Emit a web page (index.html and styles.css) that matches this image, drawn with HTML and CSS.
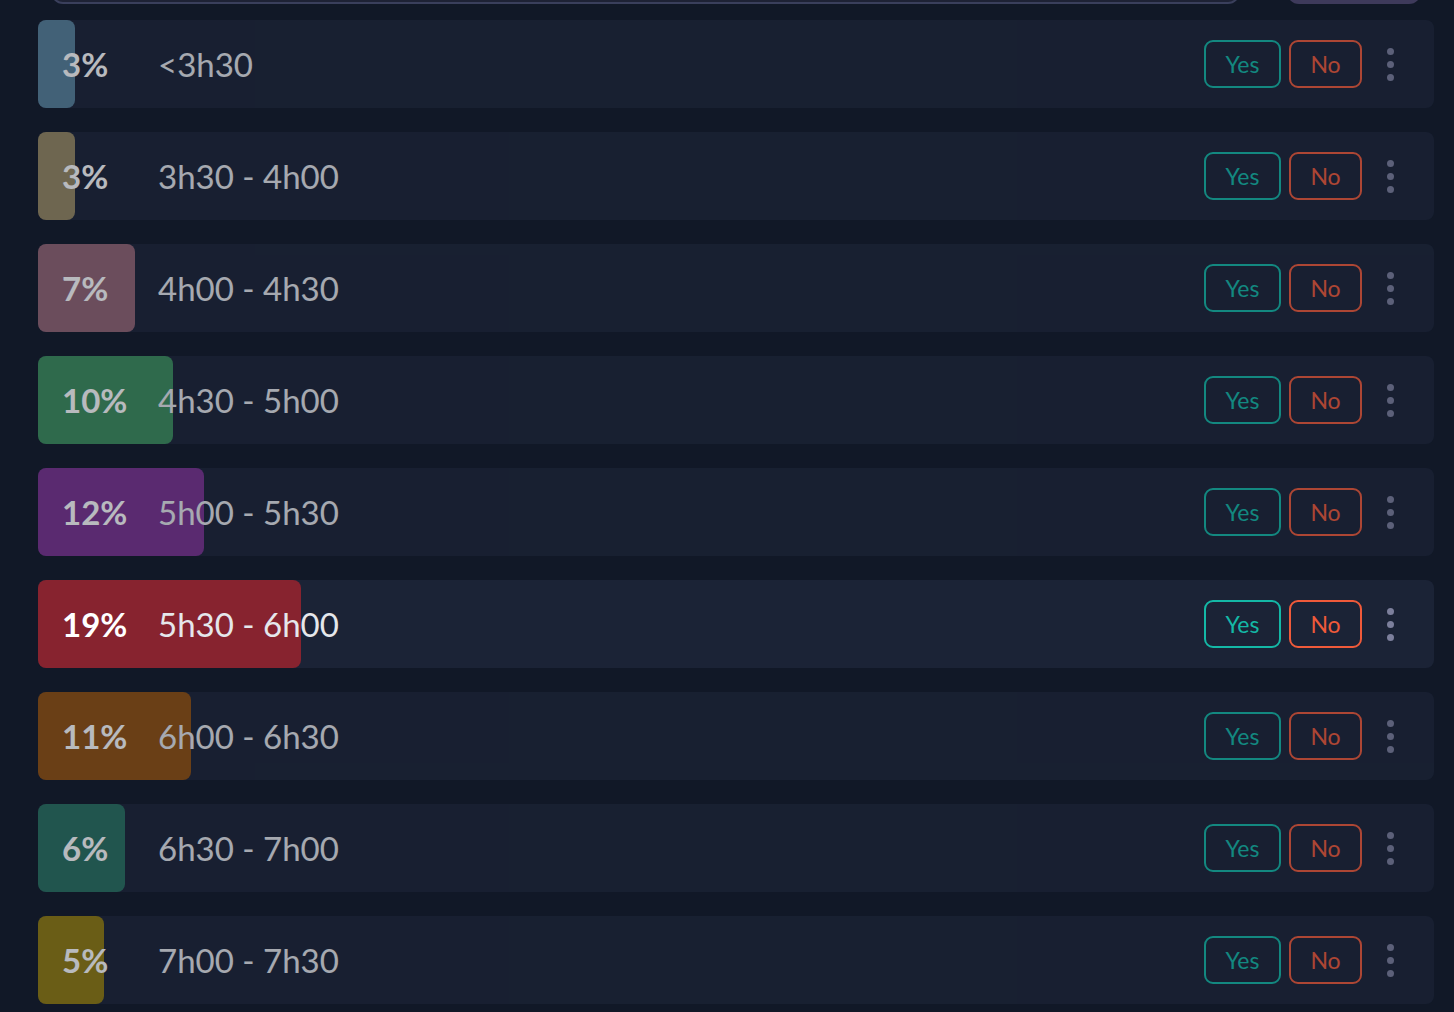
FILE: index.html
```html
<!DOCTYPE html>
<html lang="en">
<head>
<meta charset="utf-8">
<title>Poll</title>
<link rel="stylesheet" href="styles.css">
</head>
<body>
<div class="top">
  <div class="top-input"></div>
  <div class="top-btn"></div>
</div>
<div class="list">
  <div class="row dim">
    <div class="bar c1" style="width:2.65%"></div>
    <span class="pct">3%</span><span class="label">&lt;3h30</span>
    <div class="actions"><button class="yes">Yes</button><button class="no">No</button><span class="kebab"><i></i><i></i><i></i></span></div>
  </div>
  <div class="row dim">
    <div class="bar c2" style="width:2.65%"></div>
    <span class="pct">3%</span><span class="label">3h30 - 4h00</span>
    <div class="actions"><button class="yes">Yes</button><button class="no">No</button><span class="kebab"><i></i><i></i><i></i></span></div>
  </div>
  <div class="row dim">
    <div class="bar c3" style="width:6.95%"></div>
    <span class="pct">7%</span><span class="label">4h00 - 4h30</span>
    <div class="actions"><button class="yes">Yes</button><button class="no">No</button><span class="kebab"><i></i><i></i><i></i></span></div>
  </div>
  <div class="row dim">
    <div class="bar c4" style="width:9.67%"></div>
    <span class="pct">10%</span><span class="label">4h30 - 5h00</span>
    <div class="actions"><button class="yes">Yes</button><button class="no">No</button><span class="kebab"><i></i><i></i><i></i></span></div>
  </div>
  <div class="row dim">
    <div class="bar c5" style="width:11.89%"></div>
    <span class="pct">12%</span><span class="label">5h00 - 5h30</span>
    <div class="actions"><button class="yes">Yes</button><button class="no">No</button><span class="kebab"><i></i><i></i><i></i></span></div>
  </div>
  <div class="row active">
    <div class="bar c6" style="width:18.84%"></div>
    <span class="pct">19%</span><span class="label">5h30 - 6h00</span>
    <div class="actions"><button class="yes">Yes</button><button class="no">No</button><span class="kebab"><i></i><i></i><i></i></span></div>
  </div>
  <div class="row dim">
    <div class="bar c7" style="width:10.96%"></div>
    <span class="pct">11%</span><span class="label">6h00 - 6h30</span>
    <div class="actions"><button class="yes">Yes</button><button class="no">No</button><span class="kebab"><i></i><i></i><i></i></span></div>
  </div>
  <div class="row dim">
    <div class="bar c8" style="width:6.23%"></div>
    <span class="pct">6%</span><span class="label">6h30 - 7h00</span>
    <div class="actions"><button class="yes">Yes</button><button class="no">No</button><span class="kebab"><i></i><i></i><i></i></span></div>
  </div>
  <div class="row dim">
    <div class="bar c9" style="width:4.73%"></div>
    <span class="pct">5%</span><span class="label">7h00 - 7h30</span>
    <div class="actions"><button class="yes">Yes</button><button class="no">No</button><span class="kebab"><i></i><i></i><i></i></span></div>
  </div>
</div>
</body>
</html>
```

FILE: styles.css
```css
* { box-sizing: border-box; }
html, body { margin: 0; padding: 0; }
body {
  background: #111827;
  font-family: "Lato", "Noto Sans", sans-serif;
  overflow: hidden;
  height: 1012px;
}
.top {
  display: flex;
  gap: 47px;
  padding: 0 33px 0 51px;
  margin-top: -40px;
  height: 44px;
}
.top-input {
  flex: 1;
  height: 44px;
  border: 2px solid #3a3f5c;
  background: #1e2235;
  border-radius: 0 0 12px 12px;
}
.top-btn {
  width: 134px;
  height: 44px;
  background: #3e3a5b;
  border-radius: 0 0 12px 12px;
}
.list {
  display: flex;
  flex-direction: column;
  gap: 24px;
  padding: 16px 20px 0 38px;
}
.row {
  position: relative;
  height: 88px;
  border-radius: 8px;
  background: #1b2336;
  display: flex;
  align-items: center;
  padding: 0 24px;
}
.row.dim { opacity: 0.7; }
.bar {
  position: absolute;
  left: 0; top: 0; bottom: 0;
  border-radius: 8px;
}
.c1 { background: #58809a; }
.c2 { background: #968762; }
.c3 { background: #926473; }
.c4 { background: #3c8d5c; }
.c5 { background: #79328f; }
.c6 { background: #87232f; }
.c7 { background: #905010; }
.c8 { background: #296f5f; }
.c9 { background: #907b0f; }
.pct {
  position: relative;
  width: 96px;
  font-size: 33px;
  font-weight: 700;
  color: #ffffff;
}
.label {
  position: relative;
  font-size: 33px;
  color: #e5e7eb;
}
.actions {
  position: relative;
  margin-left: auto;
  display: flex;
  align-items: center;
  gap: 8px;
}
button {
  font-family: inherit;
  height: 48px;
  background: transparent;
  border-radius: 9px;
  border: 2px solid;
  font-size: 23px;
  padding: 0;
}
.yes { width: 77px; color: #14b8a6; border-color: #14b8a6; }
.no { width: 73px; color: #f05a3a; border-color: #f05a3a; }
.kebab {
  width: 40px;
  margin-left: 0;
  display: flex;
  flex-direction: column;
  align-items: center;
  gap: 6px;
}
.kebab i {
  display: block;
  width: 7px;
  height: 7px;
  border-radius: 50%;
  background: #7c7f9c;
}
```
